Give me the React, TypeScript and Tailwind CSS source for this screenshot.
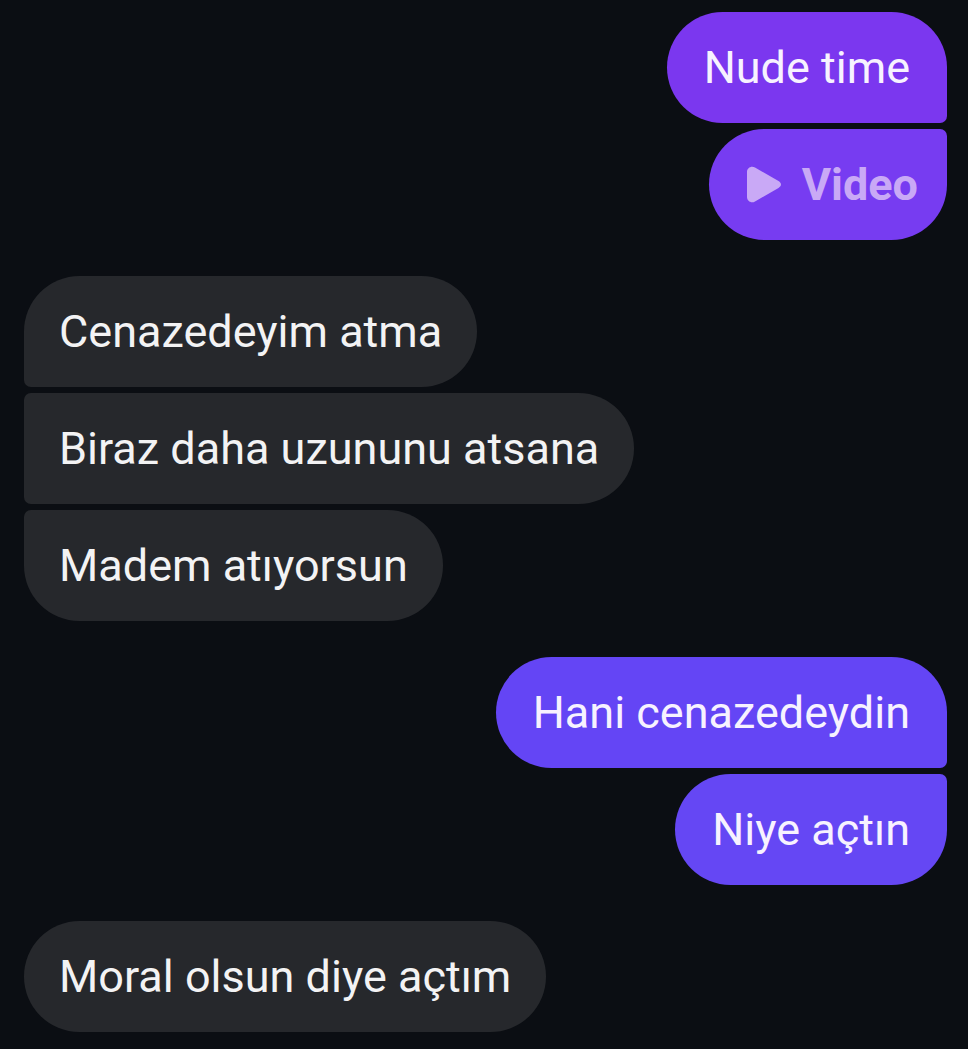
import React from "react";

function PlayIcon() {
	return (
		<svg width="36" height="37" viewBox="0 0 36 37" className="shrink-0">
			<path
				d="M1 6C1 1.8 5.5 -0.6 9 1.6L32.5 15.1C35.8 17.1 35.8 19.9 32.5 21.9L9 35.4C5.5 37.6 1 35.2 1 31Z"
				fill="#c9a9f6"
			/>
		</svg>
	);
}

function OutBubble({
	children,
	corners,
	bg,
	pad = "px-[37px]",
}: {
	children: React.ReactNode;
	corners: string;
	bg: string;
	pad?: string;
}) {
	return (
		<div className="flex justify-end">
			<div
				className={`h-[111px] ${pad} flex items-center text-[45px] leading-none text-[#f7f2ff] ${bg} ${corners}`}
			>
				{children}
			</div>
		</div>
	);
}

function InBubble({ children, corners }: { children: React.ReactNode; corners: string }) {
	return (
		<div className="flex justify-start">
			<div
				className={`h-[111px] px-[35px] flex items-center text-[45px] leading-none text-[#f3f3f4] bg-[#26282c] ${corners}`}
			>
				{children}
			</div>
		</div>
	);
}

export default function App() {
	return (
		<div
			className="w-[968px] h-[1049px] overflow-hidden bg-[#0b0e13] pt-[12px] pl-[24px] pr-[21px] flex flex-col gap-[36px]"
			style={{ fontFamily: "Roboto, 'Noto Sans', sans-serif" }}
		>
			<div className="flex flex-col gap-[6px]">
				<OutBubble bg="bg-[#7b37ef]" corners="rounded-l-[56px] rounded-tr-[56px] rounded-br-[7px]">
					Nude time
				</OutBubble>
				<OutBubble
					bg="bg-[#773cf1]"
					pad="pl-[37px] pr-[29px]"
					corners="rounded-l-[56px] rounded-tr-[7px] rounded-br-[56px]"
				>
					<span className="flex items-center gap-[20px]">
						<PlayIcon />
						<span className="font-bold text-[#c9a9f6]">Video</span>
					</span>
				</OutBubble>
			</div>

			<div className="flex flex-col gap-[6px]">
				<InBubble corners="rounded-r-[56px] rounded-tl-[56px] rounded-bl-[7px]">Cenazedeyim atma</InBubble>
				<InBubble corners="rounded-r-[56px] rounded-l-[7px]">Biraz daha uzununu atsana</InBubble>
				<InBubble corners="rounded-r-[56px] rounded-tl-[7px] rounded-bl-[56px]">Madem atıyorsun</InBubble>
			</div>

			<div className="flex flex-col gap-[6px]">
				<OutBubble bg="bg-[#6445f5]" corners="rounded-l-[56px] rounded-tr-[56px] rounded-br-[7px]">
					Hani cenazedeydin
				</OutBubble>
				<OutBubble bg="bg-[#6547f4]" corners="rounded-l-[56px] rounded-tr-[7px] rounded-br-[56px]">
					Niye açtın
				</OutBubble>
			</div>

			<div className="flex flex-col gap-[6px]">
				<InBubble corners="rounded-[56px]">Moral olsun diye açtım</InBubble>
			</div>
		</div>
	);
}
